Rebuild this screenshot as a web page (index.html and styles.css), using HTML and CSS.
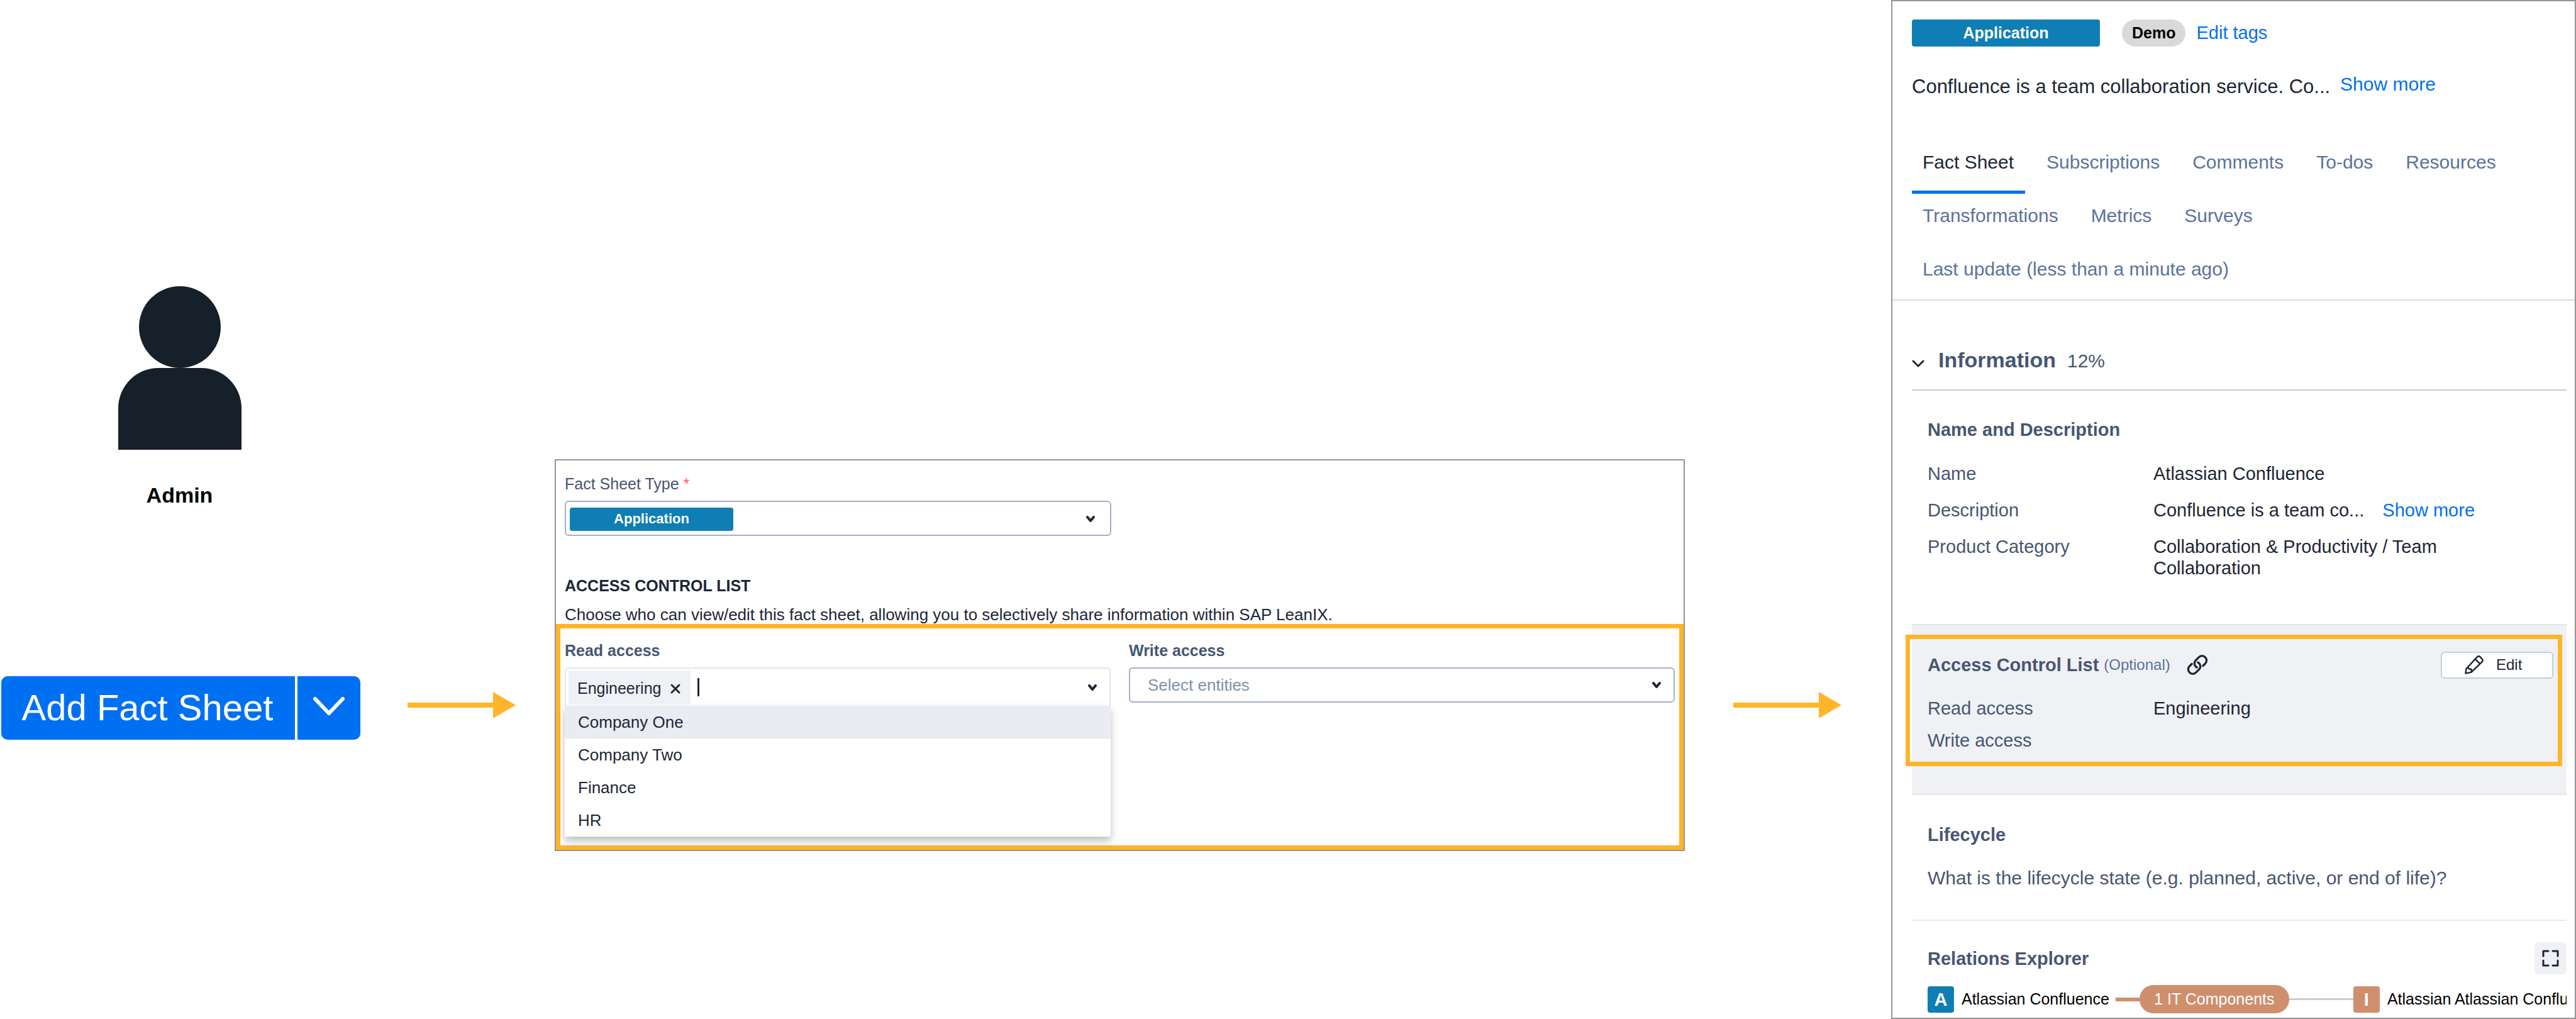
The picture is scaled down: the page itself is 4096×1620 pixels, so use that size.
FILE: index.html
```html
<!DOCTYPE html>
<html lang="en">
<head>
  <meta charset="UTF-8">
  <title>Access Control List</title>
  <meta name="viewport" content="width=device-width, initial-scale=1.0">
  <link rel="stylesheet" href="styles.css">
</head>
<body>
  <main class="flow">
    <section class="actor">
      <div class="admin">
        <svg class="person" viewBox="0 0 196 260" aria-hidden="true">
          <circle cx="98" cy="65" r="65"/>
          <path d="M0 260V194a64 64 0 0 1 64-64h68a64 64 0 0 1 64 64v66z"/>
        </svg>
        <div class="actor-name">Admin</div>
      </div>
      <div class="split-button">
        <button type="button" class="split-main">Add Fact Sheet</button>
        <button type="button" class="split-toggle" aria-label="More options">
          <svg width="50" height="30" viewBox="0 0 50 30"><path d="M3 3l22 23L47 3"/></svg>
        </button>
      </div>
    </section>

    <svg class="arrow" viewBox="0 0 172 42" aria-hidden="true"><path d="M0 17h136V0l36 21-36 21V25H0z"/></svg>

    <section class="form-panel">
      <div class="form-top">
        <label class="form-label" for="type">Fact Sheet Type <span class="required">*</span></label>
        <div class="select-box type-box">
          <button type="button" class="type-tag" id="type">Application</button>
          <svg class="caret" viewBox="0 0 14 10"><path d="M2 2l5 6 5-6"/></svg>
        </div>
        <h2>ACCESS CONTROL LIST</h2>
        <p class="hint">Choose who can view/edit this fact sheet, allowing you to selectively share information within SAP LeanIX.</p>
      </div>

      <div class="highlight form-access">
        <div class="field">
          <label class="form-label strong" for="read">Read access</label>
          <div class="select-box open">
            <span class="chip">Engineering
              <button type="button" class="chip-remove" aria-label="Remove"><svg viewBox="0 0 18 18"><path d="M3 3l12 12M15 3L3 15"/></svg></button>
            </span>
            <span class="text-cursor"></span>
            <input type="text" id="read" class="search-input">
            <svg class="caret" viewBox="0 0 14 10"><path d="M2 2l5 6 5-6"/></svg>
          </div>
          <ul class="options">
            <li class="active">Company One</li>
            <li>Company Two</li>
            <li>Finance</li>
            <li>HR</li>
          </ul>
        </div>
        <div class="field">
          <label class="form-label strong" for="write">Write access</label>
          <div class="select-box">
            <input type="text" id="write" class="search-input" placeholder="Select entities">
            <svg class="caret" viewBox="0 0 14 10"><path d="M2 2l5 6 5-6"/></svg>
          </div>
        </div>
      </div>
    </section>

    <svg class="arrow" viewBox="0 0 172 42" aria-hidden="true"><path d="M0 17h136V0l36 21-36 21V25H0z"/></svg>

    <section class="fact-sheet">
      <header class="sheet-header">
        <div class="tags">
          <span class="sheet-type">Application</span>
          <span class="tag">Demo</span>
          <a href="#">Edit tags</a>
        </div>
        <div class="summary">
          <span class="summary-text">Confluence is a team collaboration service. Co...</span>
          <a href="#">Show more</a>
        </div>
        <nav class="tabs">
          <a href="#" class="tab selected">Fact Sheet</a>
          <a href="#" class="tab">Subscriptions</a>
          <a href="#" class="tab">Comments</a>
          <a href="#" class="tab">To-dos</a>
          <a href="#" class="tab">Resources</a>
          <a href="#" class="tab">Transformations</a>
          <a href="#" class="tab">Metrics</a>
          <a href="#" class="tab">Surveys</a>
          <a href="#" class="tab">Last update (less than a minute ago)</a>
        </nav>
      </header>

      <div class="sheet-body">
        <div class="section-title">
          <svg class="section-caret" viewBox="0 0 20 12"><path d="M2 2l8 8 8-8"/></svg>
          <h2>Information</h2>
          <span class="percent">12%</span>
        </div>

        <div class="name-section">
          <h3>Name and Description</h3>
          <dl>
            <dt>Name</dt>
            <dd>Atlassian Confluence</dd>
            <dt>Description</dt>
            <dd>Confluence is a team co... <a href="#" class="more">Show more</a></dd>
            <dt>Product Category</dt>
            <dd>Collaboration &amp; Productivity / Team Collaboration</dd>
          </dl>
        </div>

        <div class="acl">
          <div class="highlight acl-box">
            <div class="acl-head">
              <h3>Access Control List</h3>
              <span class="optional">(Optional)</span>
              <svg class="link-icon" viewBox="0 0 126 124"><path d="M98 68l14-14a28 28 0 0 0-40-40L52 34a28 28 0 0 0 8 44M28 56L14 70a28 28 0 0 0 40 40l20-20a28 28 0 0 0-8-44"/></svg>
              <button type="button" class="edit-button">
                <svg viewBox="0 0 124 124"><path d="M6 118l4-30L82 10q10-10 20 0l11 12q10 10 1 20l-70 68zM70 24l31 31M10 88l12-10 7 11 15 2v19"/></svg>
                Edit
              </button>
            </div>
            <dl>
              <dt>Read access</dt>
              <dd>Engineering</dd>
              <dt>Write access</dt>
              <dd></dd>
            </dl>
          </div>
        </div>

        <div class="lifecycle">
          <h3>Lifecycle</h3>
          <p>What is the lifecycle state (e.g. planned, active, or end of life)?</p>
        </div>

        <div class="relations">
          <div class="relations-head">
            <h3>Relations Explorer</h3>
            <button type="button" class="expand-button" aria-label="Full screen">
              <svg viewBox="0 0 27 27"><path d="M2 10V2h8M17 2h8v8M25 17v8h-8M10 25H2v-8"/></svg>
            </button>
          </div>
          <div class="graph">
            <span class="node-badge app">A</span>
            <span class="node-name">Atlassian Confluence</span>
            <span class="edge thick"></span>
            <span class="relation">1 IT Components</span>
            <span class="edge"></span>
            <span class="node-badge">I</span>
            <span class="node-name">Atlassian Atlassian Confluence</span>
          </div>
        </div>
      </div>
    </section>
  </main>
</body>
</html>
```
FILE: styles.css
```css
* {
  margin: 0;
  padding: 0;
  box-sizing: border-box;
}

body {
  font-family: "Liberation Sans", Arial, sans-serif;
  font-size: 25px;
  color: #1d2635;
  background: #fff;
}

button,
input {
  font: inherit;
  color: inherit;
  border: none;
  background: none;
}

a {
  color: #0070f2;
  text-decoration: none;
}

ul {
  list-style: none;
}

svg {
  fill: none;
  stroke-linecap: round;
  stroke-linejoin: round;
  flex-shrink: 0;
}

.flow {
  display: flex;
  align-items: flex-start;
  min-height: 100vh;
}

/* Admin and the add button */
.actor {
  width: 573px;
  padding: 455px 0 0 2px;
  flex-shrink: 0;
}

.admin {
  padding-right: 4px;
}

.person {
  display: block;
  width: 196px;
  height: 260px;
  margin: 0 auto;
  fill: #16202a;
}

.actor-name {
  margin-top: 52px;
  font-size: 34px;
  line-height: 40px;
  font-weight: 700;
  color: #000;
  text-align: center;
}

.split-button {
  display: flex;
  gap: 4px;
  height: 101px;
  margin-top: 268px;
}

.split-main,
.split-toggle {
  background: #0070f2;
  color: #fff;
}

.split-main {
  flex: 1;
  padding: 0 2px 2px 0;
  font-size: 58px;
  border-radius: 10px 0 0 10px;
}

.split-toggle {
  width: 100px;
  border-radius: 0 10px 10px 0;
}

.split-toggle svg {
  stroke: #fff;
  stroke-width: 6;
}

.arrow {
  width: 172px;
  height: 42px;
  margin: 1100px 62px 0 75px;
  fill: #ffb529;
}

/* Create form */
.highlight {
  border: 7px solid #ffb529;
}

.form-panel {
  flex: 1;
  margin: 730px 2px 0 0;
  border: 2px solid #959595;
  min-width: 0;
}

.form-top {
  height: 260px;
  padding: 22px 14px 0;
}

.form-label {
  display: block;
  line-height: 30px;
  color: #475672;
}

.form-label.strong {
  font-weight: 700;
}

.required {
  color: #ff5c5c;
}

.select-box {
  display: flex;
  align-items: center;
  height: 56px;
  padding: 0 20px 0 6px;
  border: 2px solid #a3b0c6;
  border-radius: 6px;
}

.type-box {
  width: calc(50% - 14px);
  margin-top: 12px;
  padding: 2px 24px 0 6px;
}

.type-tag {
  width: 260px;
  height: 37px;
  font-size: 22px;
  font-weight: 700;
  color: #fff;
  background: #0f7eb5;
  border-radius: 4px;
}

.caret {
  width: 14px;
  height: 10px;
  margin-left: auto;
  stroke: #1d2635;
  stroke-width: 4;
}

.form-top h2 {
  margin-top: 64px;
  font-size: 25px;
  line-height: 30px;
}

.hint {
  margin-top: 16px;
  font-size: 26px;
  line-height: 30px;
  white-space: nowrap;
}

.form-access {
  display: flex;
  gap: 29px;
  height: 359px;
  padding: 20px 7px 0;
}

.field {
  flex: 1;
}

.field .select-box {
  margin-top: 12px;
}

.select-box.open {
  height: 61px;
  padding-left: 4px;
  border-color: #e2e5ee;
  border-bottom: none;
  border-radius: 6px 6px 0 0;
}

.chip {
  display: flex;
  align-items: center;
  gap: 14px;
  height: 54px;
  padding: 4px 15px 0 14px;
  background: #f0f1f5;
  border-radius: 3px;
}

.chip-remove {
  width: 18px;
  height: 18px;
}

.chip-remove svg {
  display: block;
  stroke: #1d2635;
  stroke-width: 3;
}

.text-cursor {
  width: 3px;
  height: 29px;
  margin-left: 11px;
  background: #1d2635;
}

.search-input {
  flex: 1;
  min-width: 0;
  padding-left: 22px;
  font-size: 26px;
}

.search-input::placeholder {
  color: #8191ad;
  opacity: 1;
}

.options {
  background: #fff;
  box-shadow: 0 7px 12px rgba(0, 0, 0, 0.25);
}

.options li {
  padding-left: 21px;
  font-size: 26px;
  line-height: 52px;
}

.options .active {
  background: #e9ecf1;
}

/* Fact sheet */
.fact-sheet {
  width: 1089px;
  min-height: 1620px;
  flex-shrink: 0;
  margin-left: 17px;
  border: 2px solid #959595;
}

.sheet-header {
  height: 476px;
  padding: 29px 13px 0 31px;
  border-bottom: 2px solid #d5dbe5;
}

.tags {
  display: flex;
  align-items: center;
  font-size: 29px;
}

.sheet-type,
.tag {
  height: 43px;
  line-height: 43px;
  font-size: 25px;
  font-weight: 700;
  text-align: center;
}

.sheet-type {
  width: 299px;
  margin-right: 35px;
  color: #fff;
  background: #0f7eb5;
  border-radius: 4px;
}

.tag {
  margin-right: 17px;
  padding: 0 16px;
  color: #000;
  background: #d9d9d9;
  border-radius: 22px;
}

.summary {
  display: flex;
  gap: 16px;
  margin-top: 42px;
  font-size: 30px;
  line-height: 36px;
}

.summary-text {
  padding-top: 4px;
  font-size: 31px;
}

.tabs {
  display: flex;
  flex-wrap: wrap;
  column-gap: 17px;
  margin-top: 67px;
}

.tab {
  height: 85px;
  padding: 18px 18px 0 17px;
  font-size: 30px;
  line-height: 34px;
  color: #5b739c;
}

.tab.selected {
  color: #1d2635;
  border-bottom: 5px solid #0070f2;
}

.sheet-body {
  padding: 0 13px 0 31px;
}

.section-title {
  display: flex;
  align-items: baseline;
  height: 143px;
  padding-top: 75px;
  border-bottom: 2px solid #c3cbda;
  color: #475672;
}

.section-title h2 {
  margin: 0 18px 0 22px;
  font-size: 34px;
}

.section-caret {
  width: 20px;
  height: 12px;
  margin-bottom: 4px;
  stroke: #1d2635;
  stroke-width: 3;
}

.percent {
  font-size: 30px;
}

.fact-sheet h3 {
  font-size: 29px;
  line-height: 34px;
  color: #475672;
}

.fact-sheet dl {
  display: grid;
  grid-template-columns: 359px 1fr;
  font-size: 29px;
  line-height: 34px;
}

.fact-sheet dt {
  color: #475672;
}

.name-section {
  height: 371px;
  padding: 45px 100px 0 25px;
}

.name-section dl {
  row-gap: 24px;
  margin-top: 36px;
}

.more {
  margin-left: 21px;
}

.acl {
  height: 272px;
  padding-top: 15px;
  background: #f0f1f5;
  border-top: 2px solid #e2e5ea;
  border-bottom: 2px solid #e2e5ea;
}

.acl-box {
  height: 209px;
  margin: 0 7px 0 -10px;
  padding: 20px 7px 0 28px;
}

.acl-head {
  display: flex;
  align-items: center;
  height: 42px;
}

.optional {
  margin-left: 8px;
  font-size: 24px;
  color: #5b739c;
}

.link-icon {
  width: 32px;
  height: 32px;
  margin-left: 27px;
  stroke: #1d2635;
  stroke-width: 13;
  overflow: visible;
}

.edit-button {
  display: flex;
  align-items: center;
  gap: 20px;
  width: 179px;
  height: 43px;
  margin-left: auto;
  padding-left: 36px;
  font-size: 24px;
  background: #fff;
  border: 2px solid #c3cede;
  border-radius: 6px;
}

.edit-button svg {
  width: 30px;
  height: 30px;
  stroke: #1d2635;
  stroke-width: 10;
}

.acl-box dl {
  row-gap: 17px;
  margin-top: 31px;
}

.lifecycle {
  height: 200px;
  padding: 46px 0 0 25px;
  border-bottom: 2px solid #e5e9f1;
}

.lifecycle p {
  margin-top: 35px;
  font-size: 30px;
  line-height: 34px;
  color: #475672;
}

.relations-head {
  display: flex;
  align-items: center;
  justify-content: space-between;
  margin-top: 34px;
  padding-left: 25px;
}

.expand-button {
  width: 51px;
  height: 51px;
  background: #f0f1f5;
  border-radius: 6px;
}

.expand-button svg {
  display: block;
  width: 27px;
  height: 27px;
  margin: 0 auto;
  stroke: #1d2635;
  stroke-width: 3;
}

.graph {
  display: flex;
  align-items: center;
  margin-top: 17px;
  padding-left: 25px;
  overflow: hidden;
  white-space: nowrap;
  color: #000;
}

.graph span {
  flex-shrink: 0;
}

.node-badge {
  width: 42px;
  height: 42px;
  font-size: 29px;
  line-height: 42px;
  font-weight: 700;
  text-align: center;
  color: #fff;
  background: #cf8f6d;
  border-radius: 4px;
}

.node-badge.app {
  background: #0f7eb5;
}

.node-name {
  margin: 0 10px 0 12px;
}

.relation {
  width: 238px;
  height: 45px;
  line-height: 45px;
  text-align: center;
  color: #fff;
  background: #cf8f6d;
  border-radius: 22px;
}

.edge {
  width: 102px;
  height: 3px;
  background: #ccc;
}

.edge.thick {
  width: 38px;
  height: 6px;
  background: #cf8f6d;
}
```
